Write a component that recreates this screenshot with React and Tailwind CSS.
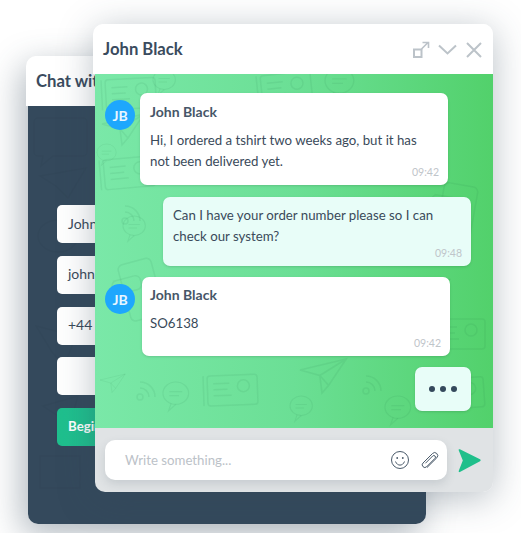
const doodleCls = "fill-none stroke-[#1f6b3a]/[0.08] stroke-[1.5]";

function Doodles() {
  const phone = (x, y, r = 0) => (
    <g transform={`translate(${x} ${y}) rotate(${r})`}>
      <rect x="0" y="0" width="34" height="58" rx="5" />
      <circle cx="17" cy="50" r="3" />
      <path d="M-8 14h22a5 5 0 0 1 5 5v4a5 5 0 0 1-5 5H2l-8 6 1-6a5 5 0 0 1-5-5v-4a5 5 0 0 1 5-5z" />
    </g>
  );
  const bubble = (x, y, s = 1) => (
    <g transform={`translate(${x} ${y}) scale(${s})`}>
      <ellipse cx="16" cy="14" rx="16" ry="14" />
      <path d="M8 12h16M8 17h12M10 27l-3 9 9-8" />
    </g>
  );
  const plane = (x, y, s = 1) => (
    <g transform={`translate(${x} ${y}) scale(${s})`}>
      <path d="M0 10 42 0 26 24 18 15ZM18 15 42 0M18 15l2 16 6-7" />
    </g>
  );
  const wifi = (x, y) => (
    <g transform={`translate(${x} ${y})`}>
      <circle cx="3" cy="17" r="3" />
      <path d="M3 8a9 9 0 0 1 9 9M3 2a15 15 0 0 1 15 15" />
    </g>
  );
  const card = (x, y, r = 0) => (
    <g transform={`translate(${x} ${y}) rotate(${r})`}>
      <rect x="0" y="0" width="50" height="30" rx="3" />
      <circle cx="36" cy="11" r="6" />
      <path d="M6 8h16M6 14h14M6 20h18M-4 0v30" />
    </g>
  );
  return (
    <svg className={`absolute inset-0 h-full w-full ${doodleCls}`} viewBox="0 0 398 354" aria-hidden="true">
      {card(10, 6, -3)}
      {bubble(58, -4, 0.7)}
      {plane(7, 40)}
      {bubble(2, 70, 0.6)}
      {card(8, 86, -5)}
      {wifi(27, 130)}
      {bubble(28, 142, 0.7)}
      {phone(22, 192, -15)}
      {plane(5, 300, 0.6)}
      {wifi(42, 306)}
      {bubble(68, 308, 0.8)}
      {card(112, 302, -2)}
      {plane(190, 212, 0.8)}
      {card(165, 2, -6)}
      {bubble(230, -6, 0.9)}
      {phone(305, 28, -12)}
      {plane(335, 130, 0.5)}
      {phone(350, 108, 10)}
      {bubble(110, 205, 0.7)}
      {bubble(172, 212, 0.7)}
      {plane(205, 285, 1.1)}
      {wifi(268, 300)}
      {bubble(195, 322, 0.7)}
      {bubble(290, 322, 0.8)}
      {card(340, 245, 0)}
      {plane(330, 205, 0.6)}
      {card(338, 306, -4)}
    </svg>
  );
}

function BackDoodles() {
  return (
    <svg className="absolute inset-y-0 left-0 h-full w-[67px] fill-none stroke-black/[0.025] stroke-[1.5]" viewBox="0 0 67 418" aria-hidden="true">
      <path d="M10 12h45a4 4 0 0 1 4 4v30a4 4 0 0 1-4 4H25l-12 10 2-10h-5a4 4 0 0 1-4-4V16a4 4 0 0 1 4-4z" />
      <path d="M12 70 58 62 40 92 28 80z" />
      <ellipse cx="30" cy="130" rx="20" ry="16" />
      <path d="M15 300 50 290 40 325 30 310zM12 350h40v32H12zM8 220l40 10-12 30-12-14z" />
    </svg>
  );
}

function Avatar() {
  return (
    <div className="flex h-[30px] w-[30px] shrink-0 items-center justify-center rounded-full bg-[#1ea7fd] text-[14px] font-bold text-white/90">
      JB
    </div>
  );
}

function Time({ children }) {
  return <div className="absolute bottom-[6px] right-[9px] text-[10.5px] leading-[14px] text-[#bfc5ca]">{children}</div>;
}

function BackField({ children }) {
  return (
    <div className="flex h-[38px] w-[300px] items-center rounded-[5px] bg-white pb-[2px] pl-[11px] text-[14px] text-[#3a4a5a]">
      {children}
    </div>
  );
}

export default function App() {
  return (
    <div
      className="relative h-[533px] w-[521px] overflow-hidden bg-white text-[#3a4a5a]"
      style={{ fontFamily: 'Lato, "Open Sans", sans-serif' }}
    >
      {/* back window */}
      <div className="absolute left-[26px] top-[56px] z-0 flex h-[468px] w-[400px] flex-col">
        <div className="absolute inset-0 left-[2px] rounded-[10px] shadow-[-6px_10px_34px_rgba(52,72,90,0.4)]" />
        <div className="relative flex h-[50px] items-center rounded-t-[10px] bg-white pl-[10px] pt-[1px] text-[16.7px] font-bold text-[#3a4b5e]">
          Chat with us
        </div>
        <div className="relative ml-[2px] flex flex-1 flex-col gap-[12.75px] rounded-b-[10px] bg-[#34495c] pl-[29px] pt-[99px]">
          <BackDoodles />
          <div className="relative"><BackField>John</BackField></div>
          <div className="relative"><BackField>john</BackField></div>
          <div className="relative"><BackField>+44 1</BackField></div>
          <div className="relative"><BackField /></div>
          <div className="relative flex h-[38px] w-[300px] items-center rounded-[5px] bg-gradient-to-r from-[#1fc08e] to-[#1db58a] pl-[11px] text-[13.25px] font-bold text-white">
            Begin
          </div>
        </div>
      </div>

      {/* front window */}
      <div className="absolute left-[93px] top-[24px] z-10 flex h-[468px] w-[400px] flex-col">
        <div className="absolute inset-0 left-[2px] rounded-[10px] shadow-[0_6px_36px_rgba(52,72,90,0.35)]" />
        <div className="relative flex h-[50px] shrink-0 items-center justify-between rounded-t-[10px] bg-white pl-[10px] pr-[11px]">
          <span className="mt-[2px] text-[16.7px] font-bold text-[#3a4b5e]">John Black</span>
          <div className="mt-[2px] flex items-center">
            <svg width="18" height="18" viewBox="0 0 18 18" fill="none" stroke="#bcc3c9" strokeWidth="2">
              <rect x="2" y="8.5" width="7.5" height="7.5" />
              <path d="M9.5 8 16 1.5M10.5 1.5H16.5V7" strokeWidth="1.6" />
            </svg>
            <svg className="ml-[8px]" width="19" height="12" viewBox="0 0 19 12" fill="none" stroke="#bcc3c9" strokeWidth="2">
              <path d="M1 1.5 9.5 9.5 18 1.5" />
            </svg>
            <svg className="ml-[9px]" width="16" height="16" viewBox="0 0 16 16" fill="none" stroke="#bcc3c9" strokeWidth="2">
              <path d="M1 1 15 15M15 1 1 15" />
            </svg>
          </div>
        </div>

        <div className="relative ml-[2px] flex h-[354px] shrink-0 flex-col overflow-hidden bg-gradient-to-r from-[#7ae8a8] via-[#6bdf95] to-[#52d16b] pt-[19px]">
          <Doodles />
          <div className="relative ml-[10px] flex items-start gap-[5px]">
            <div className="mt-[7px]"><Avatar /></div>
            <div className="relative h-[92px] w-[308px] rounded-[7px] bg-white pl-[10px] pt-[8px] text-[13.25px] leading-[21px] shadow-sm">
              <div className="mb-[8px] text-[14px] font-bold text-[#465668]">John Black</div>
              <div>Hi, I ordered a tshirt two weeks ago, but it has<br />not been delivered yet.</div>
              <Time>09:42</Time>
            </div>
          </div>
          <div className="relative ml-[68px] mt-[12px] h-[69px] w-[308px] rounded-[7px] bg-[#e8fdf8] pl-[10px] pt-[8px] text-[13.25px] leading-[21px] shadow-sm">
            Can I have your order number please so I can<br />check our system?
            <Time>09:48</Time>
          </div>
          <div className="relative ml-[10px] mt-[11px] flex items-start gap-[7px]">
            <div className="mt-[7px]"><Avatar /></div>
            <div className="relative h-[79px] w-[308px] rounded-[7px] bg-white pl-[8px] pt-[7px] text-[13.25px] leading-[21px] shadow-sm">
              <div className="mb-[8px] text-[14px] font-bold text-[#465668]">John Black</div>
              <div>SO6138</div>
              <Time>09:42</Time>
            </div>
          </div>
          <div className="relative ml-[320px] mt-[11px] flex h-[44px] w-[56px] items-center justify-center gap-[5px] rounded-[7px] bg-[#e8fdf8] shadow-sm">
            <span className="h-[6px] w-[6px] rounded-full bg-[#34495c]" />
            <span className="h-[6px] w-[6px] rounded-full bg-[#34495c]" />
            <span className="h-[6px] w-[6px] rounded-full bg-[#34495c]" />
          </div>
        </div>

        <div className="relative ml-[2px] flex flex-1 items-center rounded-b-[10px] bg-[#e0e3e5] pl-[10px]">
          <div className="flex h-[40px] w-[342px] items-center rounded-[10px] bg-white pl-[20px] pr-[8px] text-[13.25px] text-[#bcc2c8] shadow-[0_4px_10px_rgba(52,72,90,0.15)]">
            <span className="mt-[2px] flex-1">Write something...</span>
            <svg width="18" height="18" viewBox="0 0 18 18" fill="none" stroke="#4a5a6a" strokeWidth="1">
              <circle cx="9" cy="9" r="8.5" />
              <circle cx="6.2" cy="7" r="0.9" fill="#4a5a6a" stroke="none" />
              <circle cx="11.8" cy="7" r="0.9" fill="#4a5a6a" stroke="none" />
              <path d="M4.5 10.5c1 2.6 2.8 3.6 4.5 3.6s3.5-1 4.5-3.6" />
            </svg>
            <svg className="ml-[12px]" width="18" height="18" viewBox="0 0 18 18" fill="none" stroke="#4a5a6a" strokeWidth="1">
              <path d="M6 16.5 15.8 6.8a3 3 0 0 0-4.3-4.3L2 12a2.6 2.6 0 0 0 3.7 3.7L14 7.3a1.6 1.6 0 0 0-2.3-2.3L4.4 12.3" />
            </svg>
          </div>
          <svg className="ml-[10px]" width="25" height="25" viewBox="0 0 25 25">
            <path d="M1.5 1.8c.2-.6.8-.8 1.4-.5L23 11.3c.9.5.9 1.4 0 1.9L2.9 24c-.7.4-1.4-.1-1.2-.9L5.8 12.5Z" fill="#1fbf8b" />
          </svg>
        </div>
      </div>
    </div>
  );
}
